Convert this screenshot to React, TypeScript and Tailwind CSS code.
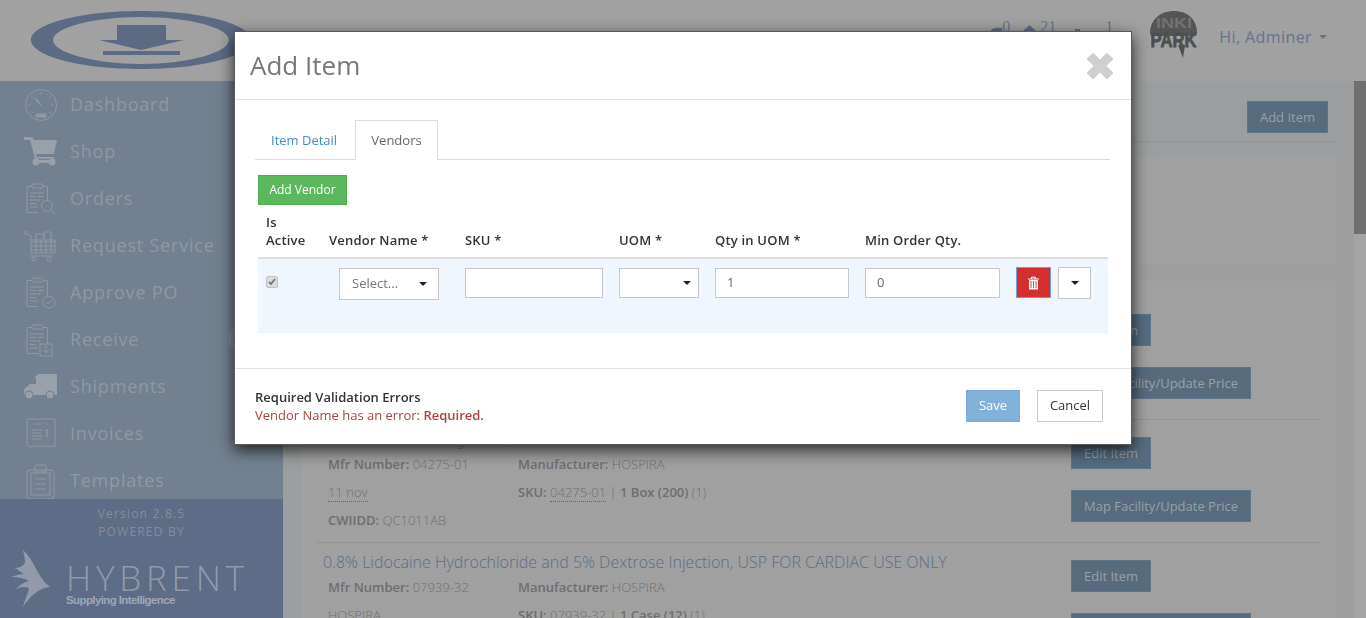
import React from "react";

const S = { fontFamily: '"Open Sans", "Liberation Sans", sans-serif' };

function Ic({ children }: { children: React.ReactNode }) {
  return (
    <svg width="36" height="36" viewBox="0 0 36 36" fill="none" stroke="#8e98a3" strokeWidth="1" className="shrink-0">
      {children}
    </svg>
  );
}

const Clip = () => (
  <>
    <path d="M4 5.500h5M20 5.500h4.500v17M15 31.500H4v-26" />
    <rect x="9" y="3" width="11" height="4" rx="1" />
    <path d="M7 12h14M7 15.500h6M15 15.500h6M7 19h10M7 22.500h6M7 26h8" />
  </>
);

const icons: Record<string, React.ReactNode> = {
  Dashboard: (
    <>
      <circle cx="18" cy="18" r="15.500" />
      <path d="M18 18l-6-7" strokeWidth="1.600" />
      <path d="M18 5v3M8 9l2 2M28 9l-2 2M5 18h3M31 18h-3M8 27l2-2M28 27l-2-2" />
      <path d="M13 27h10v3H13z" fill="#8e98a3" />
    </>
  ),
  Shop: (
    <g fill="#98a0aa" stroke="none">
      <path d="M1 3h8l2 3h23l-3 14H13l1 3h17v1.800H12L7 6H1z" />
      <rect x="11" y="26" width="21" height="3" rx="1.500" />
      <circle cx="13" cy="28" r="3.500" />
      <circle cx="29" cy="28" r="3.500" />
    </g>
  ),
  Orders: (
    <>
      <Clip />
      <circle cx="24" cy="25" r="5.500" fill="#73808f" />
      <path d="M28 29l4 4" />
    </>
  ),
  "Request Service": (
    <>
      <circle cx="3" cy="5" r="1.500" />
      <path d="M4 6l4 2v17h24V12H8M8 14h24M8 18h24M8 22h24M13 12v13M18 12v13M23 12v13M28 12v13" />
      <path d="M13 12V6h8v6M21 12V4h7v8M6 28h24" />
      <circle cx="11" cy="31" r="2" />
      <circle cx="26" cy="31" r="2" />
    </>
  ),
  "Approve PO": (
    <>
      <Clip />
      <circle cx="26" cy="27" r="6" fill="#73808f" />
      <path d="M23 27l2 2 4-4" />
    </>
  ),
  Receive: (
    <>
      <Clip />
      <rect x="17" y="22" width="12" height="12" fill="#73808f" />
      <path d="M23 24v7M20 28l3 3 3-3" />
    </>
  ),
  Shipments: (
    <g fill="#98a0aa" stroke="none">
      <path d="M15 5h19v21H1v-6l4-3 6-8z" />
      <circle cx="6" cy="26" r="4" stroke="#73808f" />
      <circle cx="27" cy="26" r="4" stroke="#73808f" />
      <path d="M6 15l5-6h2v6z" fill="#73808f" />
    </g>
  ),
  Invoices: (
    <>
      <path d="M4 3h28v28l-3-1.500-3 1.500-3-1.500-3 1.500-3-1.500-3 1.500-3-1.500-3 1.500-4-1.500z" />
      <path d="M11 8h7M22 8h3M9 14h11M9 17h9M9 20h11M9 23h9" />
      <path d="M25 14c-2-1-3 1-2 2s3 1 2 3-3 1-3 0M24 13v8" />
    </>
  ),
  Templates: (
    <>
      <rect x="4" y="7" width="27" height="29" rx="3" />
      <rect x="8" y="10" width="19" height="22" />
      <rect x="12" y="2" width="11" height="7" rx="1" />
      <path d="M12 16h11M12 21h11M12 26h11" />
    </>
  ),
};

const nav = ["Dashboard", "Shop", "Orders", "Request Service", "Approve PO", "Receive", "Shipments", "Invoices", "Templates"];

const bgBtn = "bg-[#566c7e] border border-[#5d7489] text-[#96a0a8] text-[13px] font-medium leading-[18px] whitespace-nowrap";

function Row({ title, num, text, sku, unit, extra }: { title: string; num: string; text: string; sku: string; unit: string; extra?: string }) {
  return (
    <div className="h-[123px] border-b border-[#939393] shrink-0 flex relative">
      <div className="w-[754px] pl-[6px] pt-[8px]">
        <div className="text-[16px] leading-[22px] font-light text-[#5c6d8c] whitespace-nowrap">{title}</div>
        <div className="flex pl-[5px] text-[13px] leading-[28px] text-[#707070] font-light">
          <div className="w-[190px]">
            <div><b className="font-semibold text-[#6e6e6e]">Mfr Number:</b> {num}</div>
            <div><span className="border-b border-dotted border-[#666]">{text}</span></div>
            {extra && <div><b className="font-semibold text-[#6e6e6e]">CWIIDD:</b> {extra}</div>}
          </div>
          <div>
            <div><b className="font-semibold text-[#6e6e6e]">Manufacturer:</b> HOSPIRA</div>
            <div>
              <b className="font-semibold text-[#6e6e6e]">SKU:</b> <span className="border-b border-dotted border-[#666]">{sku}</span> | <b className="font-semibold text-[#6e6e6e]">{unit}</b> (1)
            </div>
          </div>
        </div>
      </div>
      <div className="flex flex-col items-start gap-[21px] pt-[17px]">
        <button className={`h-[32px] w-[80px] ${bgBtn}`}>Edit Item</button>
        <button className={`h-[32px] w-[180px] ${bgBtn}`}>Map Facility/Update Price</button>
      </div>
    </div>
  );
}

function Caret() {
  return <span className="inline-block w-0 h-0 border-x-[4px] border-x-transparent border-t-[4px] border-t-[#222]" />;
}

const inputCls = "h-[30px] border border-[#c8c8c8] bg-white text-[13px] text-[#666] px-[11px] flex items-center";
const thCls = "px-[8px] pb-[8px] text-[13px] leading-[18px] font-semibold text-[#333] self-end tracking-[0.2px]";
const grid = "grid grid-cols-[63px_136px_154px_96px_150px_151px_100px]";

export default function App() {
  return (
    <div style={S} className="h-[618px] w-[1366px] overflow-hidden bg-[#9c9d9e] flex flex-col">
      <header className="h-[81px] bg-[#a1a1a1] flex items-start shrink-0 overflow-hidden">
        <div className="w-[283px] pl-[30px] pt-[11px]">
          <svg width="230" height="60" viewBox="30 11 230 60">
            <path
              fillRule="evenodd"
              d="M31 40C31 24 80 11 141 11S251 24 251 40 202 69 141 69 31 56 31 40ZM53 40C53 52 92 64 141 64S229 52 229 40 190 17 141 17 53 28 53 40Z"
              fill="#5c6b83"
            />
            <path d="M117 25h49v15h18l-43 10-42-10h18z" fill="#5c6b83" />
            <rect x="103" y="51" width="77" height="4" fill="#5c6b83" />
          </svg>
        </div>
        <div className="flex-1" />
        <div className="flex items-start text-[#66758f] pr-[39px]">
          <div className="flex items-start mt-[18px] h-[18px] text-[16px] leading-[18px]" style={{ fontFamily: '"Liberation Serif", serif' }}>
            <svg width="12" height="13" viewBox="0 0 12 13" className="shrink-0"><path d="M0 13c2-3 7-4 12-3v3z" fill="#5c6b83" /></svg>
            <span className="w-[8px]">0</span>
            <svg width="13" height="13" viewBox="0 0 13 13" className="ml-[13px] shrink-0"><path d="M6.500 7L13 13H0z" fill="#5c6b83" /></svg>
            <span className="w-[16px] ml-[4px]">21</span>
            <svg width="5" height="13" viewBox="0 0 5 13" className="ml-[19px] shrink-0"><rect y="11" width="5" height="2" fill="#5c6b83" /></svg>
            <span className="w-[8px] ml-[25px]">1</span>
          </div>
          <svg width="49" height="47" viewBox="0 0 49 47" className="mt-[11px] ml-[36px] shrink-0">
            <path d="M1 22C1 9 11 0 25 0s23 9 23 22l-1 3H2z" fill="#555" />
            <text x="25" y="17" textAnchor="middle" fontSize="15" fontWeight="700" fill="#727272" fontFamily="Liberation Sans" textLength="36" lengthAdjust="spacingAndGlyphs">INKI</text>
            <text x="24.500" y="36" textAnchor="middle" fontSize="21" fontWeight="700" fill="#4f4f4f" stroke="#4f4f4f" strokeWidth="0.800" fontFamily="Liberation Sans" textLength="46" lengthAdjust="spacingAndGlyphs">PARK</text>
            <path d="M29 34h7l-2 13z" fill="#4f4f4f" />
          </svg>
          <div className="flex items-center ml-[21px] mt-[26px] h-[22px] text-[16px] tracking-[0.4px] whitespace-nowrap">
            <span>Hi, Adminer</span>
            <span className="inline-block w-0 h-0 ml-[7px] border-x-[4px] border-x-transparent border-t-[4px] border-t-[#66758f]" />
          </div>
        </div>
      </header>
      <div className="flex flex-1 min-h-0">
        <aside className="w-[283px] shrink-0 bg-[#73808f] flex flex-col">
          <nav className="h-[418px] overflow-hidden shrink-0 relative">
            {nav.map((n) => (
              <div key={n} className="h-[47px] flex items-center pl-[23px] gap-[11px] text-[18px] tracking-[0.8px] text-[#8e98a3] whitespace-nowrap">
                <Ic>{icons[n]}</Ic>
                <span>{n}</span>
              </div>
            ))}
            <span className="absolute left-[229px] top-[248px] w-[12px] h-[20px] rounded-[6px] bg-[#7f8994]" />
          </nav>
          <div className="flex-1 bg-[#5f6c85] text-center text-[12px] leading-[18px] tracking-[1.200px] text-[#838c9c] pt-[6px]">
            <div>Version 2.8.5</div>
            <div>POWERED BY</div>
            <div className="flex items-start mt-[9px] pl-[11px] text-left">
              <svg width="40" height="58" viewBox="0 0 40 58" className="shrink-0">
                <path d="M12 0C23 9 26 27 39 37 28 38 19 46 12 57 14 49 17 44 18 38 13 36 8 37 4 40 8 35 13 32 18 31 13 28 6 27 0 27 5 25 9 24 13 24 8 21 6 19 4 18 8 18 12 16 14 13 14 9 13 5 12 0Z" fill="#929aa9" />
              </svg>
              <div className="ml-[15px] mt-[13px]">
                <div className="text-[35px] leading-[30px] tracking-[4.800px] font-light text-[#929aa9] whitespace-nowrap">HYBRENT</div>
                <div className="text-[11.500px] leading-[14px] font-bold tracking-[-0.6px] text-[#a0a7b4] whitespace-nowrap" style={{ fontFamily: '"Liberation Sans", sans-serif' }}>Supplying Intelligence</div>
              </div>
            </div>
          </div>
        </aside>
        <main className="flex-1 min-w-0 px-[18px] flex flex-col">
          <div className="h-[61px] border-b border-[#939495] shrink-0 flex justify-end items-start pt-[20px] pr-[8px]">
            <button className={`h-[32px] w-[81px] ${bgBtn}`}>Add Item</button>
          </div>
          <div className="h-[107px] mt-[15px] bg-[#a0a0a0] shrink-0" />
          <div className="mt-[17px] flex-1 bg-[#a0a0a0] pt-[16px] px-[16px] flex flex-col overflow-hidden">
            <Row title="Sodium Chloride Injection" num="04275-01" text="11 nov" sku="04275-01" unit="1 Box (200)" extra="QC1011AB" />
            <Row title="Sodium Chloride Injection, USP" num="04275-01" text="11 nov" sku="04275-01" unit="1 Box (200)" extra="QC1011AB" />
            <Row title="0.8% Lidocaine Hydrochloride and 5% Dextrose Injection, USP FOR CARDIAC USE ONLY" num="07939-32" text="HOSPIRA" sku="07939-32" unit="1 Case (12)" />
          </div>
        </main>
        <div className="w-[12px] shrink-0 bg-[#a3a3a3]">
          <div className="h-[153px] bg-[#6f6f6f]" />
        </div>
      </div>

      <div className="fixed left-[234px] top-[31px] w-[898px] h-[414px] bg-white border border-[#5a5a5a] shadow-[0_5px_15px_rgba(0,0,0,0.75)] flex flex-col">
        <div className="h-[68px] shrink-0 border-b border-[#e5e5e5] flex items-center justify-between pl-[15px] pr-[17px]">
          <h4 className="text-[26px] text-[#777] font-normal leading-[36px] -mt-[2px]">Add Item</h4>
          <svg width="28" height="28" viewBox="0 0 28 28">
            <path d="M2 7L7 2 14 9 21 2 26 7 19 14 26 21 21 26 14 19 7 26 2 21 9 14Z" fill="#cfcfcf" stroke="#cfcfcf" strokeWidth="2" strokeLinejoin="round" />
          </svg>
        </div>
        <div className="flex-1 pl-[20px] pr-[21px] pt-[20px]">
          <div className="h-[40px] border-b border-[#ddd] flex items-end text-[13px]">
            <a className="h-[40px] w-[100px] pl-[16px] pt-[12px] leading-[18px] text-[#428bca]">Item Detail</a>
            <a className="h-[40px] w-[83px] flex items-center justify-center text-[#666] bg-white border border-[#ddd] border-b-0 -mb-[1px]">Vendors</a>
          </div>
          <div className="pl-[3px] pr-[2px]">
            <button className="mt-[15px] h-[30px] w-[89px] bg-[#5cb85c] border border-[#4cae4c] text-white text-[12px] font-medium block">Add Vendor</button>
            <div className={`${grid} mt-[8px] border-b-2 border-[#ddd]`}>
              <div className={thCls}>Is Active</div>
              <div className={thCls}>Vendor Name *</div>
              <div className={thCls}>SKU *</div>
              <div className={thCls}>UOM *</div>
              <div className={thCls}>Qty in UOM *</div>
              <div className={thCls}>Min Order Qty.</div>
              <div />
            </div>
            <div className={`${grid} h-[74px] bg-[#eff6fe] items-start`}>
              <div className="pl-[8px] pt-[17px]">
                <div className="w-[12px] h-[12px] bg-[#dcdcdc] border border-[#c4c4c4] rounded-[2px] flex items-center justify-center">
                  <svg width="10" height="10" viewBox="0 0 10 10"><path d="M2 5l2 2 4-5" fill="none" stroke="#777" strokeWidth="1.800" /></svg>
                </div>
              </div>
              <div className="pl-[18px] pt-[9px]">
                <div className="h-[32px] w-[100px] border border-[#c8c8c8] bg-white flex items-center justify-between pl-[12px] pr-[11px] text-[13px] text-[#777]">
                  <span>Select...</span>
                  <Caret />
                </div>
              </div>
              <div className="pl-[8px] pt-[9px]"><div className={`${inputCls} w-[138px]`} /></div>
              <div className="pl-[8px] pt-[9px]">
                <div className={`${inputCls} w-[80px] justify-end !pr-[7px]`}><Caret /></div>
              </div>
              <div className="pl-[8px] pt-[9px]"><div className={`${inputCls} w-[134px]`}>1</div></div>
              <div className="pl-[8px] pt-[9px]"><div className={`${inputCls} w-[135px]`}>0</div></div>
              <div className="pl-[8px] pt-[8px] flex gap-[7px]">
                <button className="h-[31px] w-[35px] bg-[#d32f2f] border border-[#6f9ee6] flex items-center justify-center">
                  <svg width="13" height="14" viewBox="0 0 13 14">
                    <path d="M1 3h11M4.500 3V1.200h4V3" fill="none" stroke="#fff" strokeWidth="1" />
                    <path d="M2 4h9v9.500H2z" fill="#fff" />
                    <path d="M4 5v7M6.500 5v7M9 5v7" stroke="#d32f2f" strokeWidth="0.900" />
                  </svg>
                </button>
                <button className="h-[32px] w-[33px] bg-white border border-[#c8c8c8] flex items-center justify-center"><Caret /></button>
              </div>
            </div>
          </div>
        </div>
        <div className="h-[76px] shrink-0 border-t border-[#e5e5e5] flex justify-between pl-[20px] pr-[28px] pt-[21px]">
          <div className="text-[13px] leading-[18px] -mt-[2px]">
            <div className="text-[#333] font-semibold">Required Validation Errors</div>
            <div className="text-[#a94442]">Vendor Name has an error: <b className="font-semibold">Required.</b></div>
          </div>
          <div className="flex gap-[17px]">
            <button className="h-[32px] w-[54px] bg-[#82b2dc] border border-[#7aaad6] text-white text-[13px] font-medium">Save</button>
            <button className="h-[32px] w-[66px] bg-white border border-[#ccc] text-[#333] text-[13px]">Cancel</button>
          </div>
        </div>
      </div>
    </div>
  );
}
